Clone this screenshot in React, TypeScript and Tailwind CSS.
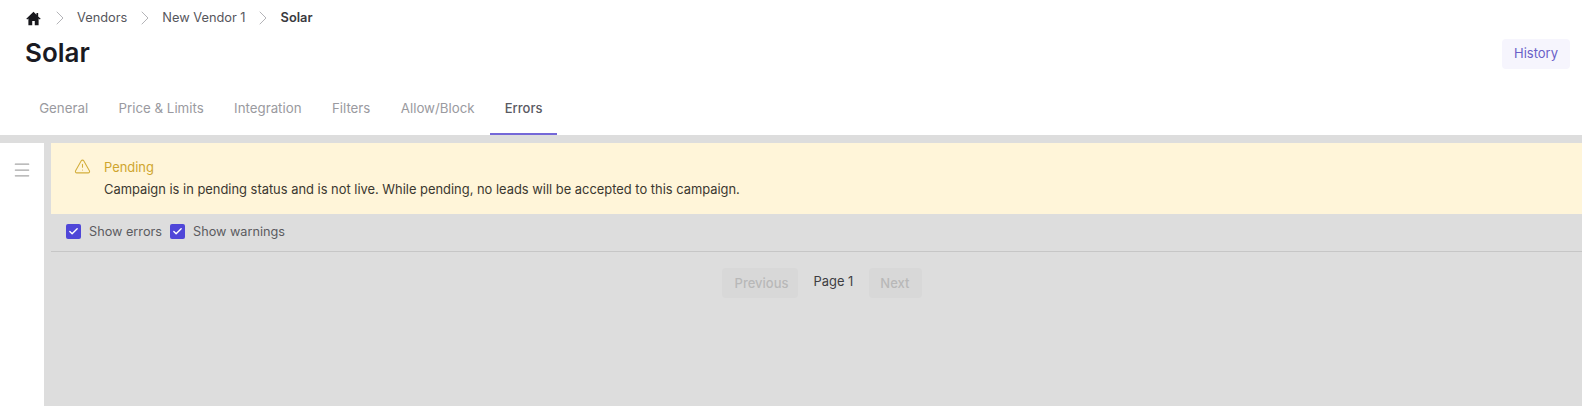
import React from 'react';
import { AlertTriangle, Check, ChevronRight, Menu } from 'lucide-react';

const crumbs = ['Vendors', 'New Vendor 1'];
const tabs = ['General', 'Price & Limits', 'Integration', 'Filters', 'Allow/Block', 'Errors'];

const CheckBox: React.FC<{ label: string }> = ({ label }) => (
  <label className="flex items-center gap-[8px]">
    <span className="flex h-[15px] w-[15px] items-center justify-center rounded-[2px] bg-[#4f46d8]">
      <Check className="h-[11px] w-[11px] text-white" strokeWidth={3} />
    </span>
    <span className="text-[12.7px] text-[#5b5b60]">{label}</span>
  </label>
);

export default function App() {
  return (
    <div className="flex h-[406px] w-[1582px] flex-col overflow-hidden bg-[#dddddd] font-['Inter',sans-serif]">
      {/* header */}
      <header className="h-[135px] shrink-0 bg-white">
        <div className="flex items-start justify-between pl-[25px] pr-[12px]">
          <div>
            <nav className="flex h-[36px] items-center text-[12.8px] text-[#56565c]">
              <svg viewBox="0 0 20 20" className="h-[17px] w-[17px] fill-[#17171c]">
                <path d="M10 2 1.5 10.2l1.1 1.1L4 10v8h4.5v-5h3v5H16v-8l1.4 1.3 1.1-1.1L15.5 7.600V3.500h-2v2.200L10 2Z" />
              </svg>
              {crumbs.map((c) => (
                <React.Fragment key={c}>
                  <ChevronRight className="mx-[5.5px] h-[24px] w-[24px] text-[#b4b4b8]" strokeWidth={1} />
                  <span>{c}</span>
                </React.Fragment>
              ))}
              <ChevronRight className="mx-[5.5px] h-[24px] w-[24px] text-[#b4b4b8]" strokeWidth={1} />
              <span className="font-semibold text-[#3a3a40]">Solar</span>
            </nav>
            <h1 className="text-[26px] font-semibold leading-[34px] text-[#1a1a22]">Solar</h1>
          </div>
          <button className="mt-[39px] h-[30px] rounded-[4px] bg-[#f6f5fd] px-[12px] text-[13px] text-[#6a5fc8]">
            History
          </button>
        </div>
        <nav className="mt-[17px] flex pl-[24px]">
          {tabs.map((t) => (
            <div
              key={t}
              className={
                t === 'Errors'
                  ? 'flex h-[48px] items-center border-b-2 border-[#7468d8] px-[15px] pb-[2px] text-[13px] font-medium text-[#5a5a62]'
                  : 'flex h-[48px] items-center border-b-2 border-transparent px-[15.2px] pb-[2px] text-[13.3px] text-[#9a9aa0]'
              }
            >
              {t}
            </div>
          ))}
        </nav>
      </header>

      <div className="mt-[8px] flex min-h-0 flex-1">
        {/* sidebar */}
        <aside className="flex w-[44px] shrink-0 justify-center bg-white pt-[17px]">
          <Menu className="h-[20px] w-[20px] text-[#a6a6a6]" strokeWidth={1.5} />
        </aside>

        <main className="ml-[7px] flex-1">
          <div className="flex h-[71px] bg-[#fff5d9] pl-[23px]">
            <AlertTriangle className="mt-[15px] h-[17px] w-[17px] text-[#d3ae3c]" strokeWidth={1.5} />
            <div className="ml-[13px] mt-[15px]">
              <div className="text-[12.9px] leading-[20px] text-[#cfa52e]">Pending</div>
              <p className="mt-[2px] text-[12.9px] leading-[20px] text-[#3b3830]">
                Campaign is in pending status and is not live. While pending, no leads will be accepted to this campaign.
              </p>
            </div>
          </div>

          <div className="flex h-[38px] items-center gap-[8px] border-b border-[#c6c6c6] pb-[1px] pl-[15px]">
            <CheckBox label="Show errors" />
            <CheckBox label="Show warnings" />
          </div>

          <div className="mt-[16px] flex items-start justify-center gap-[16px] pl-[11px]">
            <button className="h-[30px] rounded-[4px] bg-[#d8d8d8] pl-[13px] pr-[9px] pt-[2px] text-[13px] font-medium text-[#b8b8b8]">
              Previous
            </button>
            <span className="text-[12.9px] leading-[28px] text-[#3d3d42]">Page 1</span>
            <button className="h-[30px] rounded-[4px] bg-[#d8d8d8] pl-[11px] pr-[13px] pt-[2px] text-[13px] font-medium text-[#b8b8b8]">
              Next
            </button>
          </div>
        </main>
      </div>
    </div>
  );
}
